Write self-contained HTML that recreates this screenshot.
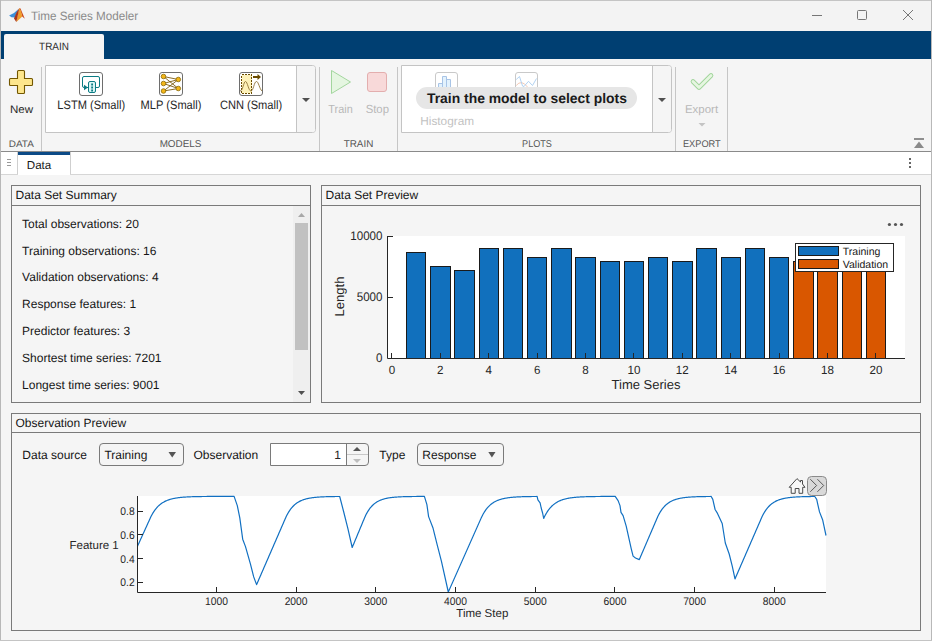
<!DOCTYPE html>
<html><head><meta charset="utf-8"><style>
html,body{margin:0;padding:0;width:932px;height:641px;overflow:hidden;background:#f5f5f5}
svg{display:block}
text{font-family:"Liberation Sans", sans-serif}
rect{shape-rendering:crispEdges}
rect[rx]{shape-rendering:auto}
</style></head><body>
<svg width="932" height="641" viewBox="0 0 932 641" text-rendering="geometricPrecision">
<rect x="0" y="0" width="932" height="641" fill="#f5f5f5"/>
<rect x="1" y="1" width="930" height="30" fill="#f3f3f3"/>
<rect x="0" y="0" width="932" height="1" fill="#c4c4c4"/>
<rect x="0" y="0" width="1" height="641" fill="#b8b8b8"/>
<rect x="931" y="0" width="1" height="641" fill="#b8b8b8"/>
<rect x="0" y="640" width="932" height="1" fill="#c4c4c4"/>
<g><path d="M9.1 15.5 L14 13 L18.5 9 L16 14.5 L15.3 17.5 L11.5 17.2 Z" fill="#3b8fd9"/><path d="M19.4 8 L20.5 8.6 L24.8 18.8 L22.3 16.6 Z" fill="#c9441c"/><path d="M19.4 8 L21 11 L22.3 16.6 L19 19.5 L16.3 22 L17.6 15 Z" fill="#ef9d2c"/><path d="M14 18.4 L16.5 12.5 L19.4 8 L18.2 13.5 L16.3 22 Z" fill="#a8341c"/></g>
<text transform="translate(31,19.6) scale(0.965,1.0)" x="0" y="0" font-size="12.1" fill="#8a8a8a" font-weight="normal" text-anchor="start">Time Series Modeler</text>
<rect x="812" y="15" width="10" height="1" fill="#767676"/>
<rect x="857.5" y="10.5" width="9" height="9" rx="1" fill="none" stroke="#767676" stroke-width="1"/>
<path d="M903 10 L913 20 M913 10 L903 20" stroke="#767676" stroke-width="1"/>
<rect x="1" y="31" width="930" height="28" fill="#003f72"/>
<path d="M4 59 V36 Q4 34 6 34 H102 Q104 34 104 36 V59 Z" fill="#f5f5f5"/>
<text transform="translate(54,49.6) scale(0.93,1.0)" x="0" y="0" font-size="10.7" fill="#2a2a2a" font-weight="normal" text-anchor="middle">TRAIN</text>
<rect x="1" y="59" width="930" height="92" fill="#f5f5f5"/>
<rect x="1" y="151" width="930" height="1" fill="#8a8a8a"/>
<rect x="41" y="67" width="1" height="84" fill="#c6c6c6"/>
<rect x="319" y="67" width="1" height="84" fill="#c6c6c6"/>
<rect x="397" y="67" width="1" height="84" fill="#c6c6c6"/>
<rect x="675" y="67" width="1" height="84" fill="#c6c6c6"/>
<rect x="727" y="67" width="1" height="84" fill="#c6c6c6"/>
<path d="M18.5 70.5 H23.5 Q24.5 70.5 24.5 71.5 V78.5 H31.5 Q32.5 78.5 32.5 79.5 V84.5 Q32.5 85.5 31.5 85.5 H24.5 V92.5 Q24.5 93.5 23.5 93.5 H18.5 Q17.5 93.5 17.5 92.5 V85.5 H10.5 Q9.5 85.5 9.5 84.5 V79.5 Q9.5 78.5 10.5 78.5 H17.5 V71.5 Q17.5 70.5 18.5 70.5 Z" fill="#fde68c" stroke="#735700" stroke-width="1.1"/>
<text transform="translate(21.5,112.7) scale(1.05,1.0)" x="0" y="0" font-size="11" fill="#262626" font-weight="normal" text-anchor="middle">New</text>
<text transform="translate(21.3,147.2) scale(1.07,1.0)" x="0" y="0" font-size="9.3" fill="#555" font-weight="normal" text-anchor="middle">DATA</text>
<path d="M45.5 65.5 H312.5 Q315.5 65.5 315.5 68.5 V129.5 Q315.5 132.5 312.5 132.5 H45.5 Z" fill="#ffffff" stroke="#c4c4c4"/>
<path d="M297 66 H312.5 Q315 66 315 68.5 V129.5 Q315 132 312.5 132 H297 Z" fill="#f5f5f5"/>
<rect x="296" y="66" width="1" height="66" fill="#c4c4c4"/>
<path d="M302 98 H310 L306 102 Z" fill="#505050"/>
<rect x="79.5" y="72.5" width="23" height="23" rx="2.5" fill="#fff" stroke="#6e6e6e"/>
<g transform="translate(79,72)" fill="none" stroke="#0b7c84" stroke-width="1"><path d="M9 15.5 H5 Q3.5 15.5 3.5 14 V6 Q3.5 4.5 5 4.5 H19 Q20.5 4.5 20.5 6 V14 Q20.5 15.5 19 15.5 H16.5"/><rect x="9.5" y="9.5" width="7" height="11" rx="1.5" fill="#d9f6f6"/><path d="M5 12.8 L9 15.5 L5 18.2 Z" fill="#0b7c84" stroke="none"/><path d="M12.2 11.6 h1.8 v1.8 h-1.8 Z M12.2 14.6 h1.8 v1.8 h-1.8 Z M12.2 17.6 h1.8 v1.8 h-1.8 Z" fill="#0b7c84" stroke="none"/></g>
<text transform="translate(91.2,109) scale(0.91,1.0)" x="0" y="0" font-size="12.2" fill="#262626" font-weight="normal" text-anchor="middle">LSTM (Small)</text>
<rect x="159.5" y="72.5" width="23" height="23" rx="2.5" fill="#fff" stroke="#6e6e6e"/>
<g transform="translate(159,72)"><path d="M4.5 4.5 L19.3 7.5" stroke="#7a5b12" stroke-width="0.9"/><path d="M4.5 4.5 L19.3 16.5" stroke="#7a5b12" stroke-width="0.9"/><path d="M4.5 11.5 L19.3 7.5" stroke="#7a5b12" stroke-width="0.9"/><path d="M4.5 11.5 L19.3 16.5" stroke="#7a5b12" stroke-width="0.9"/><path d="M4.5 19 L19.3 7.5" stroke="#7a5b12" stroke-width="0.9"/><path d="M4.5 19 L19.3 16.5" stroke="#7a5b12" stroke-width="0.9"/><circle cx="4.5" cy="4.5" r="2.3" fill="#f3b618" stroke="#8a6a08" stroke-width="0.8"/><circle cx="4.5" cy="11.5" r="2.3" fill="#f3b618" stroke="#8a6a08" stroke-width="0.8"/><circle cx="4.5" cy="19" r="2.3" fill="#f3b618" stroke="#8a6a08" stroke-width="0.8"/><circle cx="19.3" cy="7.5" r="2.3" fill="#f3b618" stroke="#8a6a08" stroke-width="0.8"/><circle cx="19.3" cy="16.5" r="2.3" fill="#f3b618" stroke="#8a6a08" stroke-width="0.8"/></g>
<text transform="translate(171,109) scale(0.91,1.0)" x="0" y="0" font-size="12.2" fill="#262626" font-weight="normal" text-anchor="middle">MLP (Small)</text>
<rect x="239.5" y="72.5" width="23" height="23" rx="2.5" fill="#fff" stroke="#6e6e6e"/>
<g transform="translate(239,72)"><rect x="2.5" y="2.5" width="10" height="18.5" fill="#fdf1b8" stroke="#6b4c00" stroke-width="1" stroke-dasharray="2 1"/><path d="M1 19 C4 19 4.5 9.5 6.5 9.5 C8.5 9.5 9.5 19 12 19 C14.5 19 15 9.5 17.5 9.5 C19.5 9.5 20.5 17 23 19" fill="none" stroke="#8f7236" stroke-width="0.9"/><path d="M14 5 H19" stroke="#6b4c00" stroke-width="2"/><path d="M18.5 2 L22 5 L18.5 8 Z" fill="#6b4c00"/></g>
<text transform="translate(251,109) scale(0.91,1.0)" x="0" y="0" font-size="12.2" fill="#262626" font-weight="normal" text-anchor="middle">CNN (Small)</text>
<text x="180.5" y="147.2" font-size="9.9" fill="#555" font-weight="normal" text-anchor="middle" >MODELS</text>
<path d="M331.5 70.5 L350.5 82 L331.5 93.5 Z" fill="#e5f6e1" stroke="#a3d69e" stroke-width="1"/>
<rect x="367.5" y="72.5" width="19" height="19" rx="2.5" fill="#f8d9d9" stroke="#e3aeae"/>
<text transform="translate(340.5,112.6) scale(0.92,1.0)" x="0" y="0" font-size="11.8" fill="#b8b8b8" font-weight="normal" text-anchor="middle">Train</text>
<text transform="translate(377.3,112.6) scale(0.96,1.0)" x="0" y="0" font-size="11.8" fill="#b8b8b8" font-weight="normal" text-anchor="middle">Stop</text>
<text x="358.5" y="147.2" font-size="9.9" fill="#555" font-weight="normal" text-anchor="middle" >TRAIN</text>
<path d="M401.5 65.5 H668.5 Q671.5 65.5 671.5 68.5 V129.5 Q671.5 132.5 668.5 132.5 H401.5 Z" fill="#ffffff" stroke="#c4c4c4"/>
<path d="M653 66 H668.5 Q671 66 671 68.5 V129.5 Q671 132 668.5 132 H653 Z" fill="#f5f5f5"/>
<rect x="652" y="66" width="1" height="66" fill="#c4c4c4"/>
<path d="M658 98 H666 L662 102 Z" fill="#505050"/>
<rect x="435.5" y="72.5" width="22" height="22" rx="2.5" fill="#fff" stroke="#c9c9c9"/>
<path d="M438.5 88 V83.5 H442.5 V88 M442.5 88 V76.5 H446.5 V88 M446.5 88 V79.5 H450.5 V88" fill="#e3f2fd" stroke="#a8c4e6" stroke-width="1"/>
<rect x="515.5" y="72.5" width="22" height="22" rx="2.5" fill="#fff" stroke="#c9c9c9"/>
<path d="M516.2 85.5 Q521.5 79 527.5 87" fill="none" stroke="#f3c3ab" stroke-width="0.9"/>
<path d="M516.2 79.5 L519.5 76.5 L522.5 86 L524 86.5 L528.5 81.3 L532.5 85.5 L536.5 78.5" fill="none" stroke="#a9cdef" stroke-width="0.9"/>
<rect x="416" y="87" width="221" height="22" rx="11" fill="#e6e6e6"/>
<text x="427" y="103" font-size="13.9" fill="#1a1a1a" font-weight="bold" text-anchor="start" >Train the model to select plots</text>
<text transform="translate(420.3,124.8) scale(1.0,1.0)" x="0" y="0" font-size="11.8" fill="#c2c2c2" font-weight="normal" text-anchor="start">Histogram</text>
<text transform="translate(537,147.2) scale(0.92,1.0)" x="0" y="0" font-size="9.9" fill="#555" font-weight="normal" text-anchor="middle">PLOTS</text>
<path d="M693 81.5 L699 87.5 L711 75.5" fill="none" stroke="#9fd49a" stroke-width="4.6" stroke-linecap="round" stroke-linejoin="round"/>
<path d="M693 81.5 L699 87.5 L711 75.5" fill="none" stroke="#e6f6e1" stroke-width="2.8" stroke-linecap="round" stroke-linejoin="round"/>
<text transform="translate(701.5,112.7) scale(1.02,1.0)" x="0" y="0" font-size="11.25" fill="#b8b8b8" font-weight="normal" text-anchor="middle">Export</text>
<path d="M698.5 123 H705.5 L702 126.5 Z" fill="#c4c4c4"/>
<text transform="translate(701.8,147.2) scale(0.95,1.0)" x="0" y="0" font-size="9.7" fill="#555" font-weight="normal" text-anchor="middle">EXPORT</text>
<rect x="914" y="138" width="10" height="2" fill="#8f8f8f"/>
<path d="M914 148 L919 141.5 L924 148 Z" fill="#8a8a8a"/>
<rect x="1" y="152" width="930" height="23" fill="#ffffff"/>
<rect x="1" y="174" width="930" height="1" fill="#d6d6d6"/>
<rect x="17" y="152" width="1" height="22" fill="#cfcfcf"/>
<rect x="18" y="152" width="52" height="23" fill="#ffffff"/>
<rect x="18" y="152" width="52" height="3" fill="#0c4a86"/>
<rect x="70" y="152" width="1" height="22" fill="#cfcfcf"/>
<rect x="7" y="159" width="4" height="1" fill="#999"/>
<rect x="7" y="162" width="4" height="1" fill="#999"/>
<rect x="7" y="165" width="4" height="1" fill="#999"/>
<text x="26.8" y="168.6" font-size="11.6" fill="#161616" font-weight="normal" text-anchor="start" >Data</text>
<rect x="909" y="158" width="2" height="2" fill="#666"/>
<rect x="909" y="162" width="2" height="2" fill="#666"/>
<rect x="909" y="166" width="2" height="2" fill="#666"/>
<rect x="11.5" y="185.5" width="299" height="217" fill="#f5f5f5" stroke="#7a7a7a"/>
<rect x="11" y="205" width="299" height="1" fill="#7a7a7a"/>
<text x="15.5" y="198.5" font-size="12" fill="#161616" font-weight="normal" text-anchor="start" >Data Set Summary</text>
<rect x="321.5" y="185.5" width="599" height="217" fill="#f5f5f5" stroke="#7a7a7a"/>
<rect x="321" y="205" width="599" height="1" fill="#7a7a7a"/>
<text x="325.5" y="198.5" font-size="12" fill="#161616" font-weight="normal" text-anchor="start" >Data Set Preview</text>
<rect x="11.5" y="413.5" width="909" height="217" fill="#f5f5f5" stroke="#7a7a7a"/>
<rect x="11" y="432" width="909" height="1" fill="#7a7a7a"/>
<text x="15.5" y="426.5" font-size="12" fill="#161616" font-weight="normal" text-anchor="start" >Observation Preview</text>
<text x="22.1" y="227.7" font-size="12" fill="#161616" font-weight="normal" text-anchor="start" >Total observations: 20</text>
<text x="22.1" y="254.54999999999998" font-size="12" fill="#161616" font-weight="normal" text-anchor="start" >Training observations: 16</text>
<text x="22.1" y="281.4" font-size="12" fill="#161616" font-weight="normal" text-anchor="start" >Validation observations: 4</text>
<text x="22.1" y="308.25" font-size="12" fill="#161616" font-weight="normal" text-anchor="start" >Response features: 1</text>
<text x="22.1" y="335.1" font-size="12" fill="#161616" font-weight="normal" text-anchor="start" >Predictor features: 3</text>
<text x="22.1" y="361.95" font-size="12" fill="#161616" font-weight="normal" text-anchor="start" >Shortest time series: 7201</text>
<text x="22.1" y="388.8" font-size="12" fill="#161616" font-weight="normal" text-anchor="start" >Longest time series: 9001</text>
<rect x="293" y="206" width="17" height="196" fill="#efefef"/>
<rect x="295" y="223" width="13" height="127" fill="#c1c1c1"/>
<path d="M298 217 L301.5 213 L305 217 Z" fill="#a8a8a8"/>
<path d="M298 391 L301.5 395 L305 391 Z" fill="#505050"/>
<rect x="387.5" y="236" width="517.5" height="122" fill="#ffffff"/>
<rect x="406.40" y="252.60" width="19.4" height="105.40" fill="#1170bd" stroke="#1a1a1a" stroke-width="1"/>
<rect x="430.60" y="266.00" width="19.4" height="92.00" fill="#1170bd" stroke="#1a1a1a" stroke-width="1"/>
<rect x="454.80" y="270.81" width="19.4" height="87.19" fill="#1170bd" stroke="#1a1a1a" stroke-width="1"/>
<rect x="479.00" y="248.69" width="19.4" height="109.31" fill="#1170bd" stroke="#1a1a1a" stroke-width="1"/>
<rect x="503.20" y="248.69" width="19.4" height="109.31" fill="#1170bd" stroke="#1a1a1a" stroke-width="1"/>
<rect x="527.40" y="257.90" width="19.4" height="100.10" fill="#1170bd" stroke="#1a1a1a" stroke-width="1"/>
<rect x="551.60" y="248.69" width="19.4" height="109.31" fill="#1170bd" stroke="#1a1a1a" stroke-width="1"/>
<rect x="575.80" y="257.90" width="19.4" height="100.10" fill="#1170bd" stroke="#1a1a1a" stroke-width="1"/>
<rect x="600.00" y="261.71" width="19.4" height="96.29" fill="#1170bd" stroke="#1a1a1a" stroke-width="1"/>
<rect x="624.20" y="261.71" width="19.4" height="96.29" fill="#1170bd" stroke="#1a1a1a" stroke-width="1"/>
<rect x="648.40" y="257.90" width="19.4" height="100.10" fill="#1170bd" stroke="#1a1a1a" stroke-width="1"/>
<rect x="672.60" y="261.71" width="19.4" height="96.29" fill="#1170bd" stroke="#1a1a1a" stroke-width="1"/>
<rect x="696.80" y="248.69" width="19.4" height="109.31" fill="#1170bd" stroke="#1a1a1a" stroke-width="1"/>
<rect x="721.00" y="257.90" width="19.4" height="100.10" fill="#1170bd" stroke="#1a1a1a" stroke-width="1"/>
<rect x="745.20" y="248.69" width="19.4" height="109.31" fill="#1170bd" stroke="#1a1a1a" stroke-width="1"/>
<rect x="769.40" y="257.90" width="19.4" height="100.10" fill="#1170bd" stroke="#1a1a1a" stroke-width="1"/>
<rect x="793.60" y="261.71" width="19.4" height="96.29" fill="#d95700" stroke="#1a1a1a" stroke-width="1"/>
<rect x="817.80" y="254.80" width="19.4" height="103.20" fill="#d95700" stroke="#1a1a1a" stroke-width="1"/>
<rect x="842.00" y="254.80" width="19.4" height="103.20" fill="#d95700" stroke="#1a1a1a" stroke-width="1"/>
<rect x="866.20" y="254.80" width="19.4" height="103.20" fill="#d95700" stroke="#1a1a1a" stroke-width="1"/>
<path d="M387.5 236 V358.5 H905" fill="none" stroke="#262626" stroke-width="1"/>
<path d="M388 358.5 H393" stroke="#262626" stroke-width="1"/>
<text transform="translate(382.5,362.0) scale(1.0,1.08)" x="0" y="0" font-size="11.6" fill="#262626" font-weight="normal" text-anchor="end">0</text>
<path d="M388 297.5 H393" stroke="#262626" stroke-width="1"/>
<text transform="translate(382.5,301.0) scale(1.0,1.08)" x="0" y="0" font-size="11.6" fill="#262626" font-weight="normal" text-anchor="end">5000</text>
<path d="M388 236.5 H393" stroke="#262626" stroke-width="1"/>
<text transform="translate(382.5,240.0) scale(1.0,1.08)" x="0" y="0" font-size="11.6" fill="#262626" font-weight="normal" text-anchor="end">10000</text>
<path d="M391.5 358 V353" stroke="#262626" stroke-width="1"/>
<text transform="translate(391.9,373.9) scale(1.0,1.03)" x="0" y="0" font-size="11.6" fill="#262626" font-weight="normal" text-anchor="middle">0</text>
<path d="M440.5 358 V353" stroke="#262626" stroke-width="1"/>
<text transform="translate(440.29999999999995,373.9) scale(1.0,1.03)" x="0" y="0" font-size="11.6" fill="#262626" font-weight="normal" text-anchor="middle">2</text>
<path d="M488.5 358 V353" stroke="#262626" stroke-width="1"/>
<text transform="translate(488.7,373.9) scale(1.0,1.03)" x="0" y="0" font-size="11.6" fill="#262626" font-weight="normal" text-anchor="middle">4</text>
<path d="M537.5 358 V353" stroke="#262626" stroke-width="1"/>
<text transform="translate(537.0999999999999,373.9) scale(1.0,1.03)" x="0" y="0" font-size="11.6" fill="#262626" font-weight="normal" text-anchor="middle">6</text>
<path d="M585.5 358 V353" stroke="#262626" stroke-width="1"/>
<text transform="translate(585.5,373.9) scale(1.0,1.03)" x="0" y="0" font-size="11.6" fill="#262626" font-weight="normal" text-anchor="middle">8</text>
<path d="M633.5 358 V353" stroke="#262626" stroke-width="1"/>
<text transform="translate(633.9,373.9) scale(1.0,1.03)" x="0" y="0" font-size="11.6" fill="#262626" font-weight="normal" text-anchor="middle">10</text>
<path d="M682.5 358 V353" stroke="#262626" stroke-width="1"/>
<text transform="translate(682.3,373.9) scale(1.0,1.03)" x="0" y="0" font-size="11.6" fill="#262626" font-weight="normal" text-anchor="middle">12</text>
<path d="M730.5 358 V353" stroke="#262626" stroke-width="1"/>
<text transform="translate(730.7,373.9) scale(1.0,1.03)" x="0" y="0" font-size="11.6" fill="#262626" font-weight="normal" text-anchor="middle">14</text>
<path d="M779.5 358 V353" stroke="#262626" stroke-width="1"/>
<text transform="translate(779.0999999999999,373.9) scale(1.0,1.03)" x="0" y="0" font-size="11.6" fill="#262626" font-weight="normal" text-anchor="middle">16</text>
<path d="M827.5 358 V353" stroke="#262626" stroke-width="1"/>
<text transform="translate(827.5,373.9) scale(1.0,1.03)" x="0" y="0" font-size="11.6" fill="#262626" font-weight="normal" text-anchor="middle">18</text>
<path d="M875.5 358 V353" stroke="#262626" stroke-width="1"/>
<text transform="translate(875.9,373.9) scale(1.0,1.03)" x="0" y="0" font-size="11.6" fill="#262626" font-weight="normal" text-anchor="middle">20</text>
<text x="646" y="388.6" font-size="13" fill="#262626" font-weight="normal" text-anchor="middle" >Time Series</text>
<text x="344.4" y="296.5" font-size="13" fill="#262626" font-weight="normal" text-anchor="middle" transform="rotate(-90 344.4 296.5)">Length</text>
<rect x="795.5" y="243.5" width="98" height="28" fill="#fff" stroke="#262626"/>
<rect x="798.5" y="246.5" width="40" height="9" fill="#1170bd" stroke="#1a1a1a"/>
<rect x="798.5" y="259.5" width="40" height="9" fill="#d95700" stroke="#1a1a1a"/>
<text x="842.8" y="254.5" font-size="10.5" fill="#161616" font-weight="normal" text-anchor="start" >Training</text>
<text x="842.8" y="267.8" font-size="10.5" fill="#161616" font-weight="normal" text-anchor="start" >Validation</text>
<circle cx="889.4" cy="224.5" r="1.6" fill="#555"/>
<circle cx="895.5" cy="224.5" r="1.6" fill="#555"/>
<circle cx="901.5" cy="224.5" r="1.6" fill="#555"/>
<text x="22.3" y="458.6" font-size="12" fill="#161616" font-weight="normal" text-anchor="start" >Data source</text>
<rect x="99.5" y="443.5" width="84" height="22" rx="3.5" fill="#f5f5f5" stroke="#7a7a7a"/>
<text x="104.4" y="458.6" font-size="12" fill="#161616" font-weight="normal" text-anchor="start" >Training</text>
<path d="M168.5 452 H176 L172.2 457.5 Z" fill="#555"/>
<text x="193.5" y="458.6" font-size="12" fill="#161616" font-weight="normal" text-anchor="start" >Observation</text>
<path d="M270.5 443.5 H365 Q368.5 443.5 368.5 447 V462 Q368.5 465.5 365 465.5 H270.5 Z" fill="#f5f5f5" stroke="#7a7a7a"/>
<rect x="271" y="444" width="75.5" height="21" fill="#ffffff"/>
<rect x="346" y="444" width="1" height="21" fill="#7a7a7a"/>
<rect x="347" y="454" width="21" height="1" fill="#c8c8c8"/>
<path d="M353 451 L357 447 L361 451 Z" fill="#555"/>
<path d="M353 459 L357 463 L361 459 Z" fill="#bdbdbd"/>
<text x="341" y="459.1" font-size="12" fill="#262626" font-weight="normal" text-anchor="end" >1</text>
<text x="379.3" y="458.6" font-size="12" fill="#161616" font-weight="normal" text-anchor="start" >Type</text>
<rect x="417.5" y="443.5" width="86" height="22" rx="3.5" fill="#f5f5f5" stroke="#7a7a7a"/>
<text x="422.3" y="458.6" font-size="12" fill="#161616" font-weight="normal" text-anchor="start" >Response</text>
<path d="M488.3 452 H495.5 L491.9 457.5 Z" fill="#555"/>
<rect x="137.5" y="496" width="688.5" height="96.29999999999995" fill="#ffffff"/>
<path d="M137.50 546.20 L138.00 545.10 L138.50 544.00 L139.00 542.90 L139.50 541.80 L140.00 540.70 L140.50 539.60 L141.00 538.50 L141.50 537.40 L142.00 536.30 L142.50 535.20 L143.00 534.10 L143.50 533.00 L144.00 531.90 L144.50 530.80 L145.00 529.70 L145.50 528.60 L146.00 527.50 L146.50 526.40 L147.00 525.30 L147.50 524.20 L148.00 523.10 L148.50 522.00 L149.00 520.90 L149.50 519.80 L150.00 518.70 L150.50 517.61 L151.00 516.58 L151.50 515.60 L152.00 514.66 L152.50 513.77 L153.00 512.92 L153.50 512.12 L154.00 511.35 L154.50 510.62 L155.00 509.93 L155.50 509.27 L156.00 508.64 L156.50 508.04 L157.00 507.47 L157.50 506.93 L158.00 506.42 L158.50 505.93 L159.00 505.47 L159.50 505.03 L160.00 504.60 L160.50 504.20 L161.00 503.82 L161.50 503.46 L162.00 503.12 L162.50 502.79 L163.00 502.48 L163.50 502.18 L164.00 501.90 L164.50 501.63 L165.00 501.38 L165.50 501.13 L166.00 500.90 L166.50 500.68 L167.00 500.47 L167.50 500.28 L168.00 500.09 L168.50 499.91 L169.00 499.74 L169.50 499.57 L170.00 499.42 L170.50 499.27 L171.00 499.13 L171.50 499.00 L172.00 498.87 L172.50 498.75 L173.00 498.64 L173.50 498.53 L174.00 498.42 L174.50 498.32 L175.00 498.23 L175.50 498.14 L176.00 498.06 L176.50 497.98 L177.00 497.90 L177.50 497.83 L178.00 497.76 L178.50 497.69 L179.00 497.63 L179.50 497.57 L180.00 497.51 L180.50 497.46 L181.00 497.40 L181.50 497.36 L182.00 497.31 L182.50 497.26 L183.00 497.22 L183.50 497.18 L184.00 497.14 L184.50 497.11 L185.00 497.07 L185.50 497.04 L186.00 497.01 L186.50 496.98 L187.00 496.95 L187.50 496.92 L188.00 496.90 L188.50 496.87 L189.00 496.85 L189.50 496.83 L190.00 496.81 L190.50 496.79 L191.00 496.77 L191.50 496.75 L192.00 496.73 L192.50 496.72 L193.00 496.70 L193.50 496.69 L194.00 496.67 L194.50 496.66 L195.00 496.65 L195.50 496.64 L196.00 496.62 L196.50 496.61 L197.00 496.60 L197.50 496.59 L198.00 496.58 L198.50 496.57 L199.00 496.57 L199.50 496.56 L200.00 496.55 L200.50 496.54 L201.00 496.54 L201.50 496.53 L202.00 496.52 L202.50 496.52 L203.00 496.51 L203.50 496.51 L204.00 496.50 L204.50 496.50 L205.00 496.49 L205.50 496.49 L206.00 496.48 L206.50 496.48 L207.00 496.47 L207.50 496.47 L208.00 496.47 L208.50 496.46 L209.00 496.46 L209.50 496.46 L210.00 496.46 L210.50 496.45 L211.00 496.45 L211.50 496.45 L212.00 496.45 L212.50 496.44 L213.00 496.44 L213.50 496.44 L214.00 496.44 L214.50 496.44 L215.00 496.43 L215.50 496.43 L216.00 496.43 L216.50 496.43 L217.00 496.43 L217.50 496.43 L218.00 496.42 L218.50 496.42 L219.00 496.42 L219.50 496.42 L220.00 496.42 L220.50 496.42 L221.00 496.42 L221.50 496.42 L222.00 496.42 L222.50 496.42 L223.00 496.42 L223.50 496.41 L224.00 496.41 L224.50 496.41 L225.00 496.41 L225.50 496.41 L226.00 496.41 L226.50 496.41 L227.00 496.41 L227.50 496.41 L228.00 496.41 L228.50 496.41 L229.00 496.41 L229.50 496.41 L230.00 496.41 L230.50 496.41 L231.00 496.41 L231.50 496.41 L232.00 496.41 L232.50 496.41 L233.00 496.41 L233.50 496.41 L234.00 496.41 L234.10 496.40 L237.30 505.60 L239.80 517.90 L242.70 539.20 L245.50 546.60 L250.40 563.80 L253.70 576.90 L256.60 584.60 L257.10 583.45 L257.60 582.30 L258.10 581.15 L258.60 580.00 L259.10 578.85 L259.60 577.70 L260.10 576.55 L260.60 575.40 L261.10 574.25 L261.60 573.10 L262.10 571.95 L262.60 570.80 L263.10 569.65 L263.60 568.50 L264.10 567.35 L264.60 566.20 L265.10 565.05 L265.60 563.90 L266.10 562.75 L266.60 561.60 L267.10 560.45 L267.60 559.30 L268.10 558.15 L268.60 557.00 L269.10 555.85 L269.60 554.70 L270.10 553.55 L270.60 552.40 L271.10 551.25 L271.60 550.10 L272.10 548.95 L272.60 547.80 L273.10 546.65 L273.60 545.50 L274.10 544.35 L274.60 543.20 L275.10 542.05 L275.60 540.90 L276.10 539.75 L276.60 538.60 L277.10 537.45 L277.60 536.30 L278.10 535.15 L278.60 534.00 L279.10 532.85 L279.60 531.70 L280.10 530.55 L280.60 529.40 L281.10 528.25 L281.60 527.10 L282.10 525.95 L282.60 524.80 L283.10 523.65 L283.60 522.50 L284.10 521.35 L284.60 520.20 L285.10 519.05 L285.60 517.91 L286.10 516.81 L286.60 515.77 L287.10 514.78 L287.60 513.85 L288.10 512.96 L288.60 512.12 L289.10 511.32 L289.60 510.56 L290.10 509.83 L290.60 509.15 L291.10 508.50 L291.60 507.89 L292.10 507.30 L292.60 506.74 L293.10 506.22 L293.60 505.72 L294.10 505.24 L294.60 504.79 L295.10 504.37 L295.60 503.96 L296.10 503.57 L296.60 503.21 L297.10 502.86 L297.60 502.53 L298.10 502.22 L298.60 501.92 L299.10 501.64 L299.60 501.38 L300.10 501.12 L300.60 500.88 L301.10 500.65 L301.60 500.44 L302.10 500.23 L302.60 500.04 L303.10 499.85 L303.60 499.68 L304.10 499.51 L304.60 499.35 L305.10 499.20 L305.60 499.06 L306.10 498.92 L306.60 498.79 L307.10 498.67 L307.60 498.56 L308.10 498.45 L308.60 498.34 L309.10 498.24 L309.60 498.15 L310.10 498.06 L310.60 497.98 L311.10 497.90 L311.60 497.82 L312.10 497.75 L312.60 497.68 L313.10 497.61 L313.60 497.55 L314.10 497.49 L314.60 497.44 L315.10 497.38 L315.60 497.33 L316.10 497.29 L316.60 497.24 L317.10 497.20 L317.60 497.16 L318.10 497.12 L318.60 497.08 L319.10 497.05 L319.60 497.01 L320.10 496.98 L320.60 496.95 L321.10 496.93 L321.60 496.90 L322.10 496.87 L322.60 496.85 L323.10 496.83 L323.60 496.80 L324.10 496.78 L324.60 496.76 L325.10 496.75 L325.60 496.73 L326.10 496.71 L326.60 496.70 L327.10 496.68 L327.60 496.67 L328.10 496.65 L328.60 496.64 L329.10 496.63 L329.60 496.62 L330.10 496.61 L330.60 496.59 L331.10 496.58 L331.60 496.58 L332.10 496.57 L332.60 496.56 L333.10 496.55 L333.60 496.54 L334.10 496.54 L334.60 496.53 L335.10 496.52 L335.60 496.52 L336.10 496.51 L336.60 496.50 L337.10 496.50 L337.60 496.49 L338.10 496.49 L338.60 496.48 L339.10 496.48 L339.60 496.48 L339.70 496.48 L343.60 511.50 L347.90 528.60 L352.20 547.50 L352.70 546.30 L353.20 545.10 L353.70 543.90 L354.20 542.70 L354.70 541.50 L355.20 540.30 L355.70 539.10 L356.20 537.90 L356.70 536.70 L357.20 535.50 L357.70 534.30 L358.20 533.10 L358.70 531.90 L359.20 530.70 L359.70 529.50 L360.20 528.30 L360.70 527.10 L361.20 525.90 L361.70 524.70 L362.20 523.50 L362.70 522.30 L363.20 521.10 L363.70 519.90 L364.20 518.70 L364.70 517.52 L365.20 516.40 L365.70 515.34 L366.20 514.33 L366.70 513.38 L367.20 512.48 L367.70 511.62 L368.20 510.82 L368.70 510.05 L369.20 509.33 L369.70 508.64 L370.20 507.99 L370.70 507.37 L371.20 506.79 L371.70 506.24 L372.20 505.72 L372.70 505.22 L373.20 504.76 L373.70 504.31 L374.20 503.89 L374.70 503.49 L375.20 503.12 L375.70 502.76 L376.20 502.42 L376.70 502.10 L377.20 501.80 L377.70 501.51 L378.20 501.24 L378.70 500.99 L379.20 500.74 L379.70 500.51 L380.20 500.29 L380.70 500.09 L381.20 499.89 L381.70 499.71 L382.20 499.53 L382.70 499.36 L383.20 499.21 L383.70 499.06 L384.20 498.92 L384.70 498.78 L385.20 498.66 L385.70 498.54 L386.20 498.42 L386.70 498.32 L387.20 498.21 L387.70 498.12 L388.20 498.03 L388.70 497.94 L389.20 497.86 L389.70 497.78 L390.20 497.71 L390.70 497.64 L391.20 497.57 L391.70 497.51 L392.20 497.45 L392.70 497.40 L393.20 497.34 L393.70 497.29 L394.20 497.25 L394.70 497.20 L395.20 497.16 L395.70 497.12 L396.20 497.08 L396.70 497.04 L397.20 497.01 L397.70 496.98 L398.20 496.95 L398.70 496.92 L399.20 496.89 L399.70 496.86 L400.20 496.84 L400.70 496.82 L401.20 496.79 L401.70 496.77 L402.20 496.75 L402.70 496.73 L403.20 496.72 L403.70 496.70 L404.20 496.68 L404.70 496.67 L405.20 496.65 L405.70 496.64 L406.20 496.63 L406.70 496.62 L407.20 496.60 L407.70 496.59 L408.20 496.58 L408.70 496.57 L409.20 496.56 L409.70 496.56 L410.20 496.55 L410.70 496.54 L411.20 496.53 L411.70 496.53 L412.20 496.52 L412.70 496.51 L413.20 496.51 L413.70 496.50 L414.20 496.50 L414.70 496.49 L415.20 496.49 L415.70 496.48 L416.20 496.48 L416.70 496.47 L417.20 496.47 L417.70 496.47 L418.20 496.46 L418.70 496.46 L419.20 496.46 L419.70 496.45 L420.20 496.45 L420.70 496.45 L421.20 496.44 L421.70 496.44 L422.20 496.44 L422.70 496.44 L423.20 496.44 L423.70 496.43 L424.20 496.43 L424.40 496.43 L426.90 504.60 L428.60 516.60 L432.90 527.70 L437.20 544.90 L441.40 561.20 L448.30 592.00 L448.80 590.88 L449.30 589.75 L449.80 588.62 L450.30 587.50 L450.80 586.38 L451.30 585.25 L451.80 584.12 L452.30 583.00 L452.80 581.88 L453.30 580.75 L453.80 579.62 L454.30 578.50 L454.80 577.38 L455.30 576.25 L455.80 575.12 L456.30 574.00 L456.80 572.88 L457.30 571.75 L457.80 570.62 L458.30 569.50 L458.80 568.38 L459.30 567.25 L459.80 566.12 L460.30 565.00 L460.80 563.88 L461.30 562.75 L461.80 561.62 L462.30 560.50 L462.80 559.38 L463.30 558.25 L463.80 557.12 L464.30 556.00 L464.80 554.88 L465.30 553.75 L465.80 552.62 L466.30 551.50 L466.80 550.38 L467.30 549.25 L467.80 548.12 L468.30 547.00 L468.80 545.88 L469.30 544.75 L469.80 543.62 L470.30 542.50 L470.80 541.38 L471.30 540.25 L471.80 539.12 L472.30 538.00 L472.80 536.88 L473.30 535.75 L473.80 534.62 L474.30 533.50 L474.80 532.38 L475.30 531.25 L475.80 530.12 L476.30 529.00 L476.80 527.88 L477.30 526.75 L477.80 525.62 L478.30 524.50 L478.80 523.38 L479.30 522.25 L479.80 521.12 L480.30 520.00 L480.80 518.88 L481.30 517.76 L481.80 516.69 L482.30 515.68 L482.80 514.72 L483.30 513.81 L483.80 512.94 L484.30 512.12 L484.80 511.33 L485.30 510.59 L485.80 509.88 L486.30 509.21 L486.80 508.57 L487.30 507.96 L487.80 507.39 L488.30 506.84 L488.80 506.32 L489.30 505.82 L489.80 505.35 L490.30 504.91 L490.80 504.48 L491.30 504.08 L491.80 503.70 L492.30 503.33 L492.80 502.99 L493.30 502.66 L493.80 502.35 L494.30 502.05 L494.80 501.77 L495.30 501.50 L495.80 501.25 L496.30 501.01 L496.80 500.78 L497.30 500.56 L497.80 500.35 L498.30 500.15 L498.80 499.97 L499.30 499.79 L499.80 499.62 L500.30 499.46 L500.80 499.31 L501.30 499.16 L501.80 499.02 L502.30 498.89 L502.80 498.77 L503.30 498.65 L503.80 498.54 L504.30 498.43 L504.80 498.33 L505.30 498.23 L505.80 498.14 L506.30 498.06 L506.80 497.97 L507.30 497.90 L507.80 497.82 L508.30 497.75 L508.80 497.68 L509.30 497.62 L509.80 497.56 L510.30 497.50 L510.80 497.45 L511.30 497.39 L511.80 497.34 L512.30 497.30 L512.80 497.25 L513.30 497.21 L513.80 497.17 L514.30 497.13 L514.80 497.09 L515.30 497.06 L515.80 497.03 L516.30 497.00 L516.80 496.97 L517.30 496.94 L517.80 496.91 L518.30 496.89 L518.80 496.86 L519.30 496.84 L519.80 496.82 L520.30 496.80 L520.80 496.78 L521.30 496.76 L521.80 496.74 L522.30 496.72 L522.80 496.71 L523.30 496.69 L523.80 496.68 L524.30 496.66 L524.80 496.65 L525.30 496.64 L525.80 496.63 L526.30 496.61 L526.80 496.60 L527.30 496.59 L527.80 496.58 L528.30 496.57 L528.80 496.57 L529.30 496.56 L529.80 496.55 L530.30 496.54 L530.80 496.54 L531.30 496.53 L531.80 496.52 L532.30 496.52 L532.80 496.51 L533.30 496.50 L533.80 496.50 L534.30 496.49 L534.80 496.49 L535.30 496.49 L535.80 496.48 L536.30 496.48 L536.80 496.47 L537.10 496.47 L537.90 499.80 L540.10 502.80 L541.20 508.00 L542.60 513.00 L543.70 518.40 L544.20 517.33 L544.70 516.31 L545.20 515.34 L545.70 514.41 L546.20 513.53 L546.70 512.70 L547.20 511.90 L547.70 511.15 L548.20 510.43 L548.70 509.74 L549.20 509.09 L549.70 508.47 L550.20 507.89 L550.70 507.32 L551.20 506.79 L551.70 506.29 L552.20 505.80 L552.70 505.34 L553.20 504.91 L553.70 504.49 L554.20 504.10 L554.70 503.72 L555.20 503.37 L555.70 503.03 L556.20 502.70 L556.70 502.40 L557.20 502.10 L557.70 501.83 L558.20 501.56 L558.70 501.31 L559.20 501.07 L559.70 500.84 L560.20 500.63 L560.70 500.42 L561.20 500.22 L561.70 500.04 L562.20 499.86 L562.70 499.69 L563.20 499.53 L563.70 499.38 L564.20 499.23 L564.70 499.09 L565.20 498.96 L565.70 498.84 L566.20 498.72 L566.70 498.61 L567.20 498.50 L567.70 498.40 L568.20 498.30 L568.70 498.21 L569.20 498.12 L569.70 498.03 L570.20 497.95 L570.70 497.88 L571.20 497.81 L571.70 497.74 L572.20 497.67 L572.70 497.61 L573.20 497.55 L573.70 497.50 L574.20 497.44 L574.70 497.39 L575.20 497.34 L575.70 497.30 L576.20 497.25 L576.70 497.21 L577.20 497.17 L577.70 497.13 L578.20 497.10 L578.70 497.06 L579.20 497.03 L579.70 497.00 L580.20 496.97 L580.70 496.94 L581.20 496.92 L581.70 496.89 L582.20 496.87 L582.70 496.85 L583.20 496.82 L583.70 496.80 L584.20 496.78 L584.70 496.76 L585.20 496.75 L585.70 496.73 L586.20 496.71 L586.70 496.70 L587.20 496.68 L587.70 496.67 L588.20 496.66 L588.70 496.64 L589.20 496.63 L589.70 496.62 L590.20 496.61 L590.70 496.60 L591.20 496.59 L591.70 496.58 L592.20 496.57 L592.70 496.56 L593.20 496.56 L593.70 496.55 L594.20 496.54 L594.70 496.53 L595.20 496.53 L595.70 496.52 L596.20 496.52 L596.70 496.51 L597.20 496.50 L597.70 496.50 L598.20 496.49 L598.70 496.49 L599.20 496.49 L599.70 496.48 L600.20 496.48 L600.70 496.47 L601.20 496.47 L601.70 496.47 L602.20 496.46 L602.70 496.46 L603.20 496.46 L603.70 496.45 L604.20 496.45 L604.70 496.45 L605.20 496.45 L605.70 496.44 L606.20 496.44 L606.70 496.44 L607.20 496.44 L607.70 496.44 L608.20 496.43 L608.70 496.43 L609.20 496.43 L609.70 496.43 L610.20 496.43 L610.70 496.43 L611.20 496.43 L611.70 496.42 L612.20 496.42 L612.70 496.42 L613.20 496.42 L613.70 496.42 L614.20 496.42 L614.70 496.42 L615.20 496.42 L618.10 500.60 L620.00 505.60 L621.00 512.40 L623.10 515.60 L626.20 526.20 L628.70 537.40 L631.20 548.60 L633.10 556.10 L635.50 558.00 L639.30 559.60 L639.80 558.44 L640.30 557.27 L640.80 556.11 L641.30 554.94 L641.80 553.77 L642.30 552.61 L642.80 551.45 L643.30 550.28 L643.80 549.12 L644.30 547.95 L644.80 546.79 L645.30 545.62 L645.80 544.46 L646.30 543.29 L646.80 542.12 L647.30 540.96 L647.80 539.80 L648.30 538.63 L648.80 537.47 L649.30 536.30 L649.80 535.13 L650.30 533.97 L650.80 532.81 L651.30 531.64 L651.80 530.48 L652.30 529.31 L652.80 528.14 L653.30 526.98 L653.80 525.82 L654.30 524.65 L654.80 523.49 L655.30 522.32 L655.80 521.15 L656.30 519.99 L656.80 518.83 L657.30 517.67 L657.80 516.58 L658.30 515.53 L658.80 514.55 L659.30 513.61 L659.80 512.72 L660.30 511.88 L660.80 511.08 L661.30 510.33 L661.80 509.61 L662.30 508.93 L662.80 508.28 L663.30 507.67 L663.80 507.09 L664.30 506.54 L664.80 506.01 L665.30 505.52 L665.80 505.05 L666.30 504.60 L666.80 504.18 L667.30 503.78 L667.80 503.40 L668.30 503.04 L668.80 502.69 L669.30 502.37 L669.80 502.06 L670.30 501.77 L670.80 501.49 L671.30 501.23 L671.80 500.98 L672.30 500.74 L672.80 500.52 L673.30 500.31 L673.80 500.11 L674.30 499.91 L674.80 499.73 L675.30 499.56 L675.80 499.40 L676.30 499.24 L676.80 499.10 L677.30 498.96 L677.80 498.83 L678.30 498.70 L678.80 498.58 L679.30 498.47 L679.80 498.36 L680.30 498.26 L680.80 498.17 L681.30 498.07 L681.80 497.99 L682.30 497.91 L682.80 497.83 L683.30 497.75 L683.80 497.69 L684.30 497.62 L684.80 497.56 L685.30 497.50 L685.80 497.44 L686.30 497.39 L686.80 497.34 L687.30 497.29 L687.80 497.24 L688.30 497.20 L688.80 497.16 L689.30 497.12 L689.80 497.08 L690.30 497.05 L690.80 497.01 L691.30 496.98 L691.80 496.95 L692.30 496.92 L692.80 496.90 L693.30 496.87 L693.80 496.85 L694.30 496.82 L694.80 496.80 L695.30 496.78 L695.80 496.76 L696.30 496.74 L696.80 496.72 L697.30 496.71 L697.80 496.69 L698.30 496.68 L698.80 496.66 L699.30 496.65 L699.80 496.64 L700.30 496.62 L700.80 496.61 L701.30 496.60 L701.80 496.59 L702.30 496.58 L702.80 496.57 L703.30 496.56 L703.80 496.55 L704.30 496.55 L704.80 496.54 L705.30 496.53 L705.80 496.53 L706.30 496.52 L706.80 496.51 L707.30 496.51 L707.80 496.50 L708.30 496.50 L708.80 496.49 L709.30 496.49 L709.80 496.48 L710.30 496.48 L710.80 496.47 L711.20 496.47 L712.80 499.40 L715.10 509.50 L717.50 513.40 L722.20 523.50 L725.30 543.00 L729.20 554.00 L732.30 566.40 L735.00 578.90 L735.50 577.75 L736.00 576.60 L736.50 575.45 L737.00 574.30 L737.50 573.15 L738.00 572.00 L738.50 570.85 L739.00 569.70 L739.50 568.55 L740.00 567.40 L740.50 566.25 L741.00 565.10 L741.50 563.95 L742.00 562.80 L742.50 561.65 L743.00 560.50 L743.50 559.35 L744.00 558.20 L744.50 557.05 L745.00 555.90 L745.50 554.75 L746.00 553.60 L746.50 552.45 L747.00 551.30 L747.50 550.15 L748.00 549.00 L748.50 547.85 L749.00 546.70 L749.50 545.55 L750.00 544.40 L750.50 543.25 L751.00 542.10 L751.50 540.95 L752.00 539.80 L752.50 538.65 L753.00 537.50 L753.50 536.35 L754.00 535.20 L754.50 534.05 L755.00 532.90 L755.50 531.75 L756.00 530.60 L756.50 529.45 L757.00 528.30 L757.50 527.15 L758.00 526.00 L758.50 524.85 L759.00 523.70 L759.50 522.55 L760.00 521.40 L760.50 520.25 L761.00 519.10 L761.50 517.95 L762.00 516.86 L762.50 515.81 L763.00 514.83 L763.50 513.89 L764.00 513.00 L764.50 512.15 L765.00 511.35 L765.50 510.59 L766.00 509.87 L766.50 509.18 L767.00 508.53 L767.50 507.91 L768.00 507.32 L768.50 506.77 L769.00 506.24 L769.50 505.74 L770.00 505.26 L770.50 504.81 L771.00 504.38 L771.50 503.98 L772.00 503.59 L772.50 503.22 L773.00 502.88 L773.50 502.55 L774.00 502.23 L774.50 501.94 L775.00 501.66 L775.50 501.39 L776.00 501.13 L776.50 500.89 L777.00 500.66 L777.50 500.45 L778.00 500.24 L778.50 500.04 L779.00 499.86 L779.50 499.68 L780.00 499.52 L780.50 499.36 L781.00 499.21 L781.50 499.06 L782.00 498.93 L782.50 498.80 L783.00 498.68 L783.50 498.56 L784.00 498.45 L784.50 498.35 L785.00 498.25 L785.50 498.15 L786.00 498.06 L786.50 497.98 L787.00 497.90 L787.50 497.82 L788.00 497.75 L788.50 497.68 L789.00 497.62 L789.50 497.55 L790.00 497.50 L790.50 497.44 L791.00 497.39 L791.50 497.34 L792.00 497.29 L792.50 497.24 L793.00 497.20 L793.50 497.16 L794.00 497.12 L794.50 497.08 L795.00 497.05 L795.50 497.02 L796.00 496.98 L796.50 496.96 L797.00 496.93 L797.50 496.90 L798.00 496.87 L798.50 496.85 L799.00 496.83 L799.50 496.81 L800.00 496.79 L800.50 496.77 L801.00 496.75 L801.50 496.73 L802.00 496.71 L802.50 496.70 L803.00 496.68 L803.50 496.67 L804.00 496.65 L804.50 496.64 L805.00 496.63 L805.50 496.62 L806.00 496.61 L806.50 496.60 L807.00 496.59 L807.50 496.58 L808.00 496.57 L808.50 496.56 L809.00 496.55 L809.50 496.54 L810.00 496.54 L810.50 496.53 L811.00 496.52 L811.50 496.52 L812.00 496.51 L812.50 496.50 L813.00 496.50 L813.50 496.49 L814.00 496.49 L814.50 496.48 L814.80 496.48 L816.70 499.40 L817.90 504.80 L819.50 511.90 L822.60 519.70 L824.10 526.70 L826.00 535.50" fill="none" stroke="#1170c2" stroke-width="1.2" stroke-linejoin="round"/>
<path d="M137.5 496 V592.5 H826" fill="none" stroke="#262626" stroke-width="1"/>
<path d="M138 582.5 H143" stroke="#262626"/>
<text transform="translate(134.7,586.4) scale(1.0,1.07)" x="0" y="0" font-size="10.3" fill="#262626" font-weight="normal" text-anchor="end">0.2</text>
<path d="M138 558.5 H143" stroke="#262626"/>
<text transform="translate(134.7,562.64) scale(1.0,1.07)" x="0" y="0" font-size="10.3" fill="#262626" font-weight="normal" text-anchor="end">0.4</text>
<path d="M138 534.5 H143" stroke="#262626"/>
<text transform="translate(134.7,538.88) scale(1.0,1.07)" x="0" y="0" font-size="10.3" fill="#262626" font-weight="normal" text-anchor="end">0.6</text>
<path d="M138 511.5 H143" stroke="#262626"/>
<text transform="translate(134.7,515.12) scale(1.0,1.07)" x="0" y="0" font-size="10.3" fill="#262626" font-weight="normal" text-anchor="end">0.8</text>
<path d="M216.5 592 V587" stroke="#262626"/>
<text transform="translate(216.4,605.1) scale(1.0,1.07)" x="0" y="0" font-size="10.3" fill="#262626" font-weight="normal" text-anchor="middle">1000</text>
<path d="M296.5 592 V587" stroke="#262626"/>
<text transform="translate(296.1,605.1) scale(1.0,1.07)" x="0" y="0" font-size="10.3" fill="#262626" font-weight="normal" text-anchor="middle">2000</text>
<path d="M375.5 592 V587" stroke="#262626"/>
<text transform="translate(375.79999999999995,605.1) scale(1.0,1.07)" x="0" y="0" font-size="10.3" fill="#262626" font-weight="normal" text-anchor="middle">3000</text>
<path d="M455.5 592 V587" stroke="#262626"/>
<text transform="translate(455.5,605.1) scale(1.0,1.07)" x="0" y="0" font-size="10.3" fill="#262626" font-weight="normal" text-anchor="middle">4000</text>
<path d="M535.5 592 V587" stroke="#262626"/>
<text transform="translate(535.1999999999999,605.1) scale(1.0,1.07)" x="0" y="0" font-size="10.3" fill="#262626" font-weight="normal" text-anchor="middle">5000</text>
<path d="M614.5 592 V587" stroke="#262626"/>
<text transform="translate(614.9,605.1) scale(1.0,1.07)" x="0" y="0" font-size="10.3" fill="#262626" font-weight="normal" text-anchor="middle">6000</text>
<path d="M694.5 592 V587" stroke="#262626"/>
<text transform="translate(694.5999999999999,605.1) scale(1.0,1.07)" x="0" y="0" font-size="10.3" fill="#262626" font-weight="normal" text-anchor="middle">7000</text>
<path d="M774.5 592 V587" stroke="#262626"/>
<text transform="translate(774.3,605.1) scale(1.0,1.07)" x="0" y="0" font-size="10.3" fill="#262626" font-weight="normal" text-anchor="middle">8000</text>
<text x="482.3" y="616.8" font-size="11.5" fill="#262626" font-weight="normal" text-anchor="middle" >Time Step</text>
<text x="69.5" y="549" font-size="11.5" fill="#262626" font-weight="normal" text-anchor="start" >Feature 1</text>
<path d="M797 478.6 L800.5 482 V480.5 H802.5 V484 L805 487.3 H802.7 V493.3 H799 V488.5 H795.2 V493.3 H791.2 V487.3 H789.2 Z" fill="#f8f8f8" stroke="#4a4a4a" stroke-width="1" stroke-linejoin="miter"/>
<rect x="807.5" y="476.5" width="19" height="19" rx="4" fill="#d9d9d9" stroke="#8a8a8a"/>
<path d="M810.3 479.2 L816.6 485.5 L810.3 491.8 M817.4 479.2 L823.7 485.5 L817.4 491.8" fill="none" stroke="#3a3a3a" stroke-width="0.8"/>
</svg>
</body></html>
